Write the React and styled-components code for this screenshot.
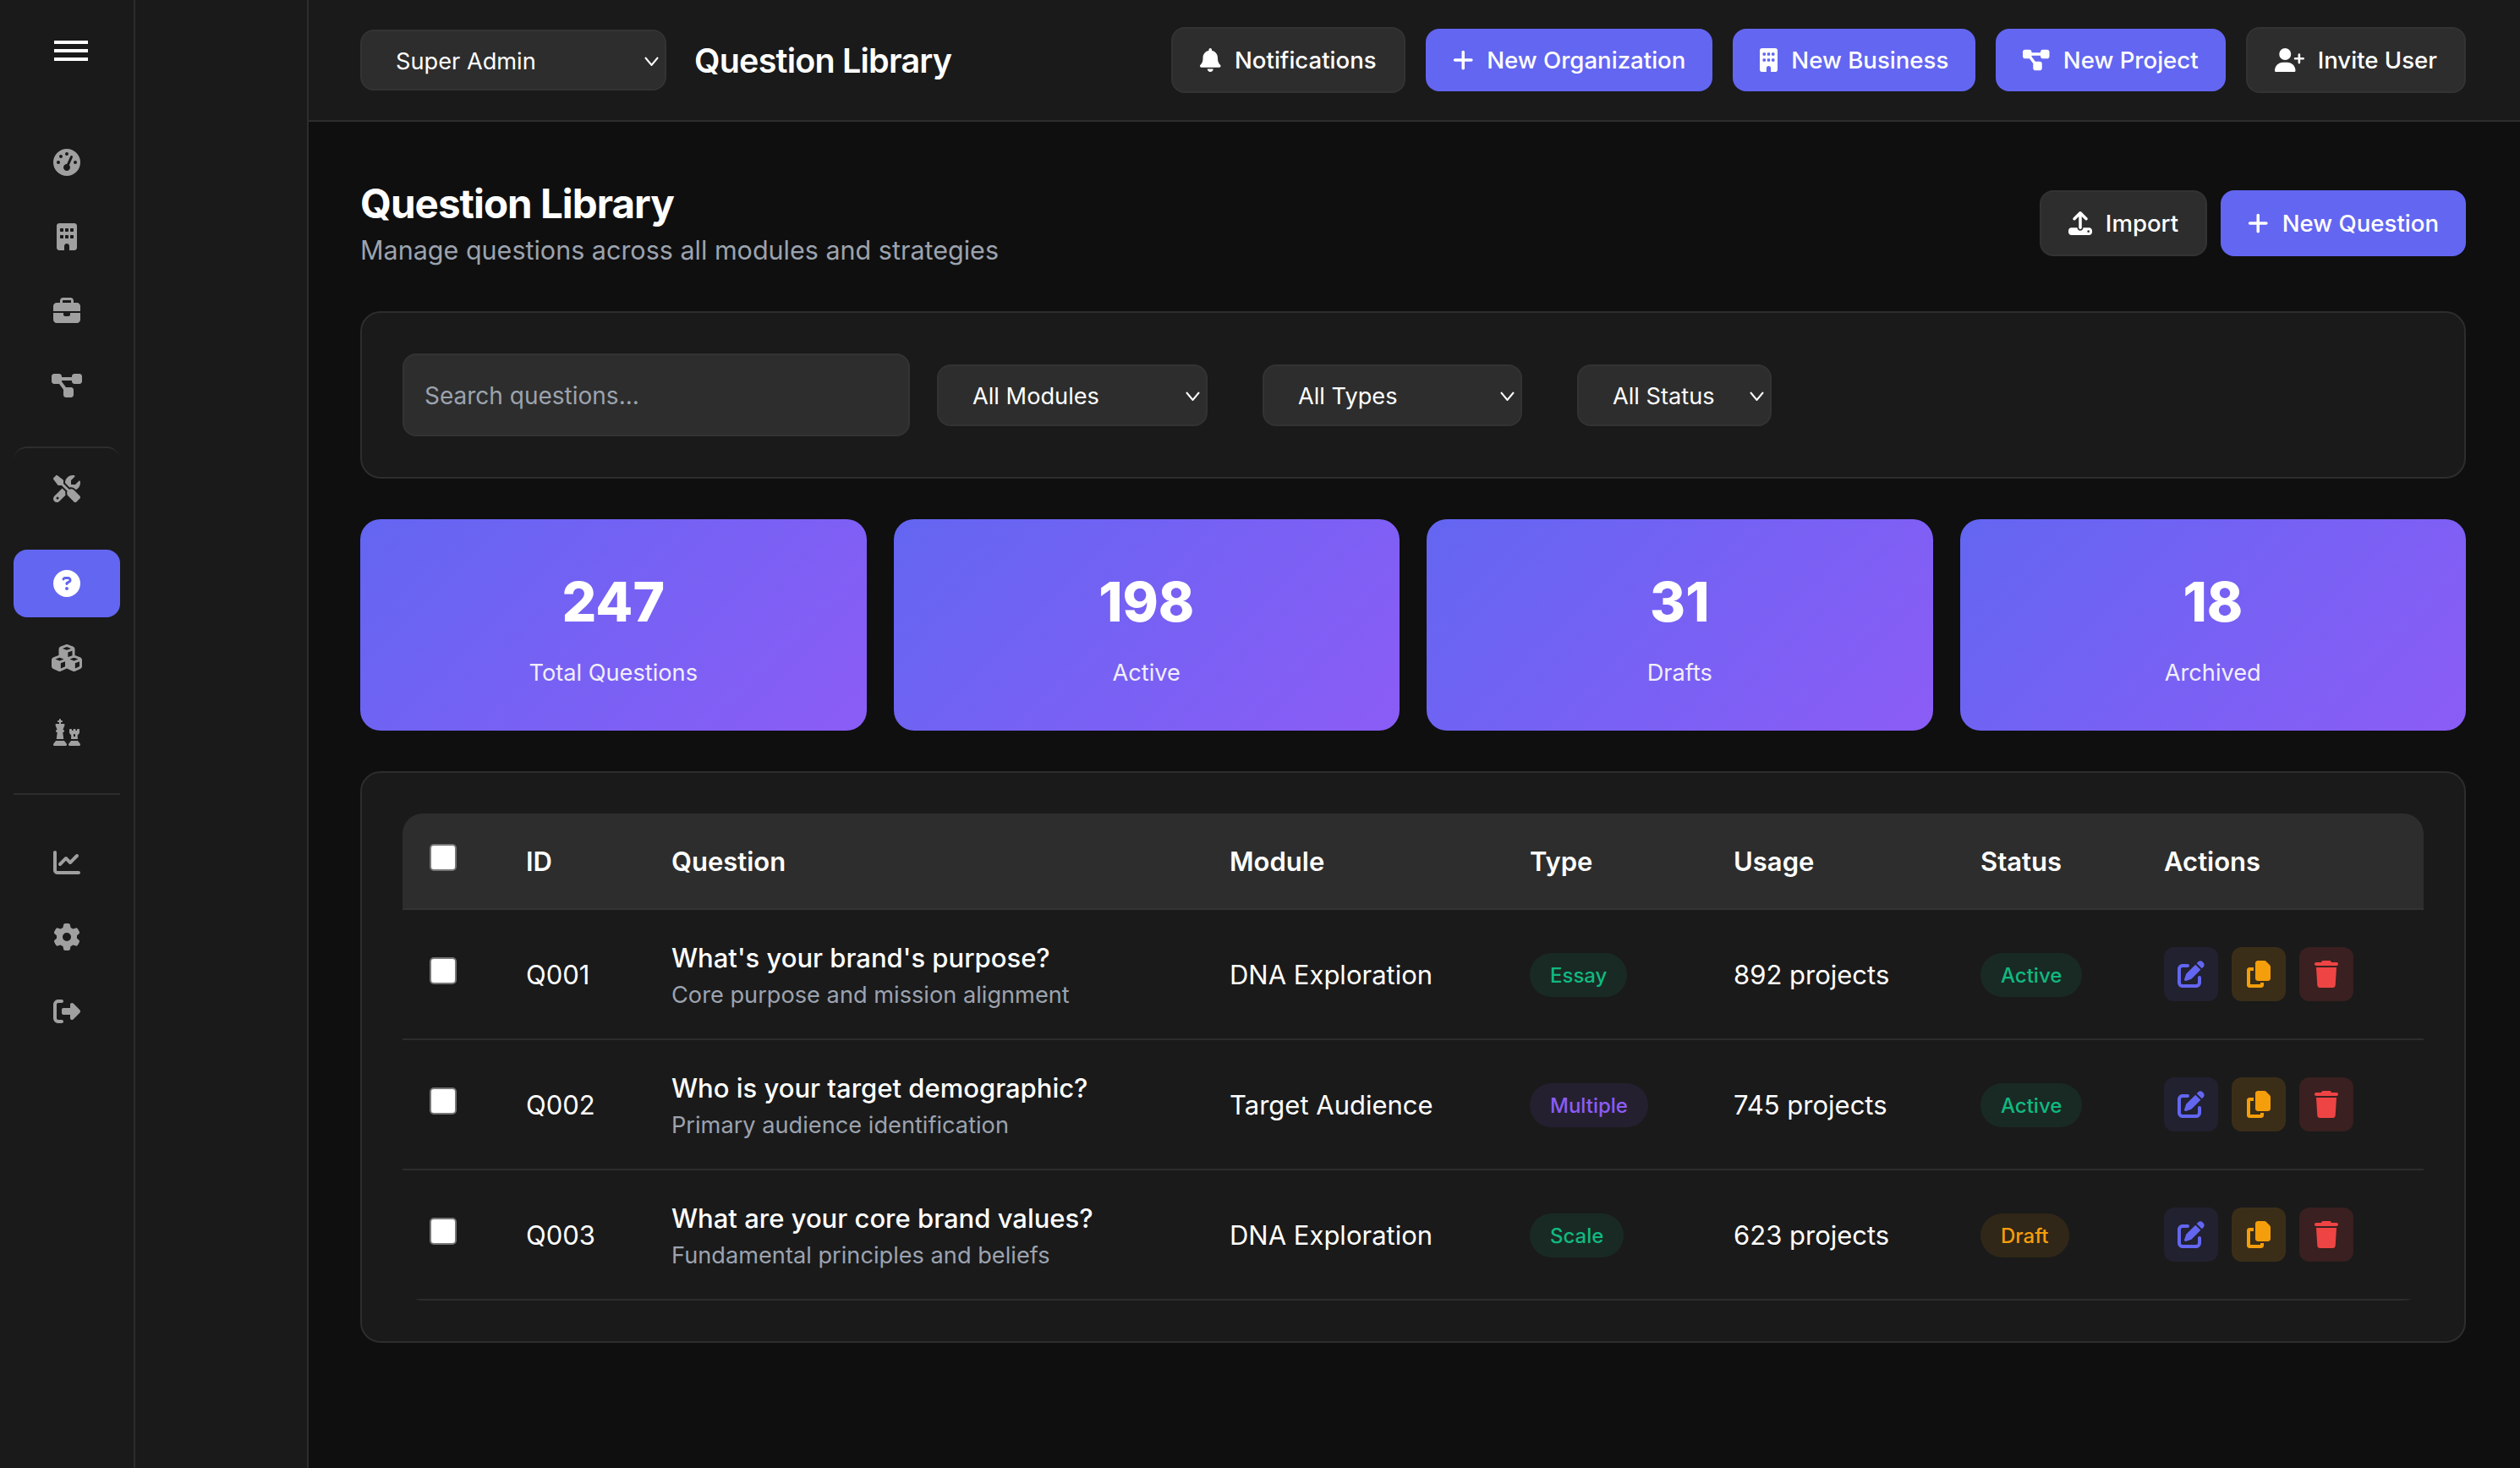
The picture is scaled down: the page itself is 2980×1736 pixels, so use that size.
import React from 'react';
import styled, { createGlobalStyle } from 'styled-components';
import {
  FaBell, FaBriefcase, FaBuilding, FaChartLine, FaChess, FaCircleQuestion, FaCopy, FaCubes,
  FaDiagramProject, FaGaugeHigh, FaGear, FaPenToSquare, FaPlus, FaRightFromBracket,
  FaScrewdriverWrench, FaTrash, FaUpload, FaUserPlus,
} from 'react-icons/fa6';

const GlobalStyle = createGlobalStyle`
  * { box-sizing: border-box; }
  html, body { margin: 0; background: #0f0f0f; }
  body { font-family: Inter, "Liberation Sans", sans-serif; color: #fff; }
`;

const COLUMNS = '114px 172px 660px 355px 241px 292px 217px 339px';

const tones = {
  green: { color: '#10b981', bg: 'rgba(16, 185, 129, 0.1)' },
  purple: { color: '#8b5cf6', bg: 'rgba(139, 92, 246, 0.1)' },
  amber: { color: '#f59e0b', bg: 'rgba(245, 158, 11, 0.1)' },
};

const actionTones = {
  edit: { color: '#6366f1', bg: 'rgba(99, 102, 241, 0.1)' },
  copy: { color: '#f59e0b', bg: 'rgba(245, 158, 11, 0.15)' },
  remove: { color: '#ef4444', bg: 'rgba(239, 68, 68, 0.15)' },
};

const Shell = styled.div`
  display: flex;
  height: 1736px;
  overflow: hidden;
`;

const Rail = styled.nav`
  width: 160px;
  flex: none;
  background: #1a1a1a;
  border-right: 2px solid #2d2d2d;
  padding: 48px 16px 0;
`;

const Burger = styled.div`
  display: flex;
  flex-direction: column;
  gap: 6px;
  width: 40px;
  margin: 0 0 80px 48px;
  span { height: 4px; background: #fff; }
`;

const NavItem = styled.a`
  display: flex;
  align-items: center;
  justify-content: center;
  height: ${(p) => (p.$ruled ? '98px' : '80px')};
  margin-bottom: ${(p) => (p.$ruled ? '24px' : '8px')};
  margin-top: ${(p) => (p.$ruled ? '32px' : '0')};
  border-radius: 16px;
  border-top: ${(p) => (p.$ruled ? '2px solid #2d2d2d' : 'none')};
  background: ${(p) => (p.$active ? '#6366f1' : 'transparent')};
  color: ${(p) => (p.$active ? '#fff' : '#a0a0a0')};
`;

// FA glyphs keep their own width: $r is width over height, $size the height
const Glyph = styled.span`
  display: block;
  flex: none;
  width: ${(p) => p.$size * (p.$r || 1)}px;
  height: ${(p) => p.$size}px;
  svg { display: block; width: 100%; height: 100%; }
`;

const RailRule = styled.div`
  height: 2px;
  background: #2d2d2d;
  margin: 32px 0 40px;
`;

const SubPanel = styled.aside`
  width: 205px;
  flex: none;
  background: #1a1a1a;
  border-right: 2px solid #2d2d2d;
`;

const Main = styled.main`
  flex: 1;
  min-width: 0;
  background: #0f0f0f;
`;

const TopBar = styled.header`
  display: flex;
  align-items: center;
  height: 144px;
  padding: 0 64px 0 61px;
  background: #1a1a1a;
  border-bottom: 2px solid #2d2d2d;
`;

const TopTitle = styled.div`
  margin-left: 33px;
  padding-top: 2px;
  font-size: 39.5px;
  font-weight: 600;
  letter-spacing: -0.8px;
`;

const TopActions = styled.div`
  display: flex;
  align-items: center;
  gap: 24px;
  margin-left: auto;
`;

const Button = styled.button`
  display: flex;
  align-items: center;
  gap: 16px;
  height: ${(p) => p.$h}px;
  padding: 0 32px;
  border: ${(p) => (p.$primary ? 'none' : '2px solid #333')};
  border-radius: 16px;
  background: ${(p) => (p.$primary ? '#6366f1' : '#2d2d2d')};
  color: #fff;
  font: 500 27.6px Inter, sans-serif;
`;

const SelectBox = styled.div`
  display: flex;
  align-items: center;
  justify-content: space-between;
  flex: none;
  width: ${(p) => p.$w}px;
  height: ${(p) => p.$h}px;
  padding: 2px 7px 0 ${(p) => p.$pad}px;
  margin-right: ${(p) => p.$after || 0}px;
  background: #2d2d2d;
  border: 2px solid #333;
  border-radius: 16px;
  font-size: 27.2px;
`;

const ChevronIcon = styled.svg`
  width: 17px;
  height: 11px;
  fill: none;
  stroke: #fff;
  stroke-width: 2;
`;

const Chevron = () => (
  <ChevronIcon viewBox="0 0 17 11">
    <path d="M1 1l7.5 9L16 1" />
  </ChevronIcon>
);

const Content = styled.div`
  padding: 60px 64px 0 61px;
`;

const PageHead = styled.div`
  display: flex;
  justify-content: space-between;
  align-items: flex-start;
  margin-bottom: 52px;
`;

const Heading = styled.div`
  padding-top: 8px;
`;

const PageTitle = styled.h1`
  margin: 0;
  font-size: 47.5px;
  line-height: 58px;
  font-weight: 700;
  letter-spacing: -0.96px;
`;

const PageSub = styled.p`
  margin: 6px 0 0;
  font-size: 30.5px;
  line-height: 40px;
  color: #9ca3af;
`;

const PageActions = styled.div`
  display: flex;
  gap: 16px;
  margin-top: 21px;
`;

const Card = styled.section`
  background: #1a1a1a;
  border: 2px solid #2d2d2d;
  border-radius: 24px;
  padding: 48px;
`;

const FilterRow = styled.div`
  display: flex;
  align-items: center;
  gap: 32px;
`;

const SearchInput = styled.input`
  width: 600px;
  height: 98px;
  flex: none;
  padding: 2px 24px 0;
  background: #2d2d2d;
  border: 2px solid #333;
  border-radius: 16px;
  color: #fff;
  font: 400 28px Inter, sans-serif;
  &::placeholder { color: #9ca3af; opacity: 1; }
`;

const StatGrid = styled.div`
  display: grid;
  grid-template-columns: repeat(4, 1fr);
  gap: 32px;
  margin: 48px 0;
`;

const StatCard = styled.div`
  display: flex;
  flex-direction: column;
  align-items: center;
  height: 250px;
  padding-top: 58px;
  border-radius: 24px;
  background: linear-gradient(135deg, #6366f1, #8b5cf6);
`;

const StatValue = styled.div`
  font-size: 64px;
  line-height: 80px;
  font-weight: 800;
`;

const StatLabel = styled.div`
  margin-top: 27px;
  font-size: 27.2px;
  line-height: 34px;
  opacity: 0.9;
`;

const Table = styled.div`
  border-radius: 24px;
  overflow: hidden;
`;

const HeadRow = styled.div`
  display: grid;
  grid-template-columns: ${COLUMNS};
  align-items: center;
  height: 114px;
  background: #2d2d2d;
  border-bottom: 2px solid #333;
  font-size: 31px;
  font-weight: 600;
`;

const Row = styled.div`
  display: grid;
  grid-template-columns: ${COLUMNS};
  align-items: center;
  height: 154px;
  border-bottom: 2px solid #2d2d2d;
  font-size: 31px;
`;

const Cell = styled.div`
  padding-left: 32px;
  min-width: 0;
  white-space: nowrap;
`;

const Check = styled.input`
  appearance: none;
  display: block;
  width: 32px;
  height: 32px;
  margin: 0 0 9px;
  background: #fff;
  border: 2px solid #767676;
  border-radius: 5px;
`;

const QuestionBlock = styled.div`
  padding-top: 3px;
`;

const QuestionTitle = styled.div`
  font-size: 31px;
  line-height: 40px;
  font-weight: 500;
`;

const QuestionHint = styled.div`
  margin-top: 6px;
  font-size: 27.2px;
  line-height: 36px;
  color: #9ca3af;
`;

const Badge = styled.span`
  display: inline-flex;
  align-items: center;
  height: 52px;
  margin-top: 2px;
  padding: 0 24px;
  border-radius: 26px;
  font-size: 24px;
  font-weight: 500;
  color: ${(p) => tones[p.$tone].color};
  background: ${(p) => tones[p.$tone].bg};
`;

const ActionRow = styled.div`
  display: flex;
  gap: 16px;
`;

const ActionButton = styled.button`
  display: flex;
  align-items: center;
  justify-content: center;
  width: 64px;
  height: 64px;
  padding: 0;
  border: none;
  border-radius: 12px;
  color: ${(p) => actionTones[p.$kind].color};
  background: ${(p) => actionTones[p.$kind].bg};
`;

const rows = [
  { id: 'Q001', title: "What's your brand's purpose?", hint: 'Core purpose and mission alignment', module: 'DNA Exploration', type: 'Essay', typeTone: 'green', usage: '892 projects', status: 'Active', statusTone: 'green' },
  { id: 'Q002', title: 'Who is your target demographic?', hint: 'Primary audience identification', module: 'Target Audience', type: 'Multiple', typeTone: 'purple', usage: '745 projects', status: 'Active', statusTone: 'green' },
  { id: 'Q003', title: 'What are your core brand values?', hint: 'Fundamental principles and beliefs', module: 'DNA Exploration', type: 'Scale', typeTone: 'green', usage: '623 projects', status: 'Draft', statusTone: 'amber' },
];

const stats = [
  { value: '247', label: 'Total Questions' },
  { value: '198', label: 'Active' },
  { value: '31', label: 'Drafts' },
  { value: '18', label: 'Archived' },
];

const railTop = [
  { icon: FaGaugeHigh },
  { icon: FaBuilding, r: 0.75 },
  { icon: FaBriefcase },
  { icon: FaDiagramProject, r: 1.125 },
  { icon: FaScrewdriverWrench, ruled: true },
  { icon: FaCircleQuestion, active: true },
  { icon: FaCubes, r: 1.125 },
  { icon: FaChess },
];

const railBottom = [{ icon: FaChartLine }, { icon: FaGear }, { icon: FaRightFromBracket }];

const RailItem = ({ item }) => (
  <NavItem $ruled={item.ruled} $active={item.active}>
    <Glyph $size={32} $r={item.r}><item.icon /></Glyph>
  </NavItem>
);

const ActionButtonWithIcon = ({ primary, h, icon: Icon, r, label }) => (
  <Button $primary={primary} $h={h}>
    <Glyph $size={28} $r={r}><Icon /></Glyph>
    {label}
  </Button>
);

const App = () => (
  <>
    <GlobalStyle />
    <Shell>
      <Rail>
        <Burger><span /><span /><span /></Burger>
        {railTop.map((item, i) => <RailItem key={i} item={item} />)}
        <RailRule />
        {railBottom.map((item, i) => <RailItem key={i} item={item} />)}
      </Rail>
      <SubPanel />
      <Main>
        <TopBar>
          <SelectBox $w={362} $h={72} $pad={40}>Super Admin<Chevron /></SelectBox>
          <TopTitle>Question Library</TopTitle>
          <TopActions>
            <ActionButtonWithIcon h={78} icon={FaBell} r={0.875} label="Notifications" />
            <ActionButtonWithIcon primary h={74} icon={FaPlus} r={0.875} label="New Organization" />
            <ActionButtonWithIcon primary h={74} icon={FaBuilding} r={0.75} label="New Business" />
            <ActionButtonWithIcon primary h={74} icon={FaDiagramProject} r={1.125} label="New Project" />
            <ActionButtonWithIcon h={78} icon={FaUserPlus} r={1.25} label="Invite User" />
          </TopActions>
        </TopBar>
        <Content>
          <PageHead>
            <Heading>
              <PageTitle>Question Library</PageTitle>
              <PageSub>Manage questions across all modules and strategies</PageSub>
            </Heading>
            <PageActions>
              <ActionButtonWithIcon h={78} icon={FaUpload} label="Import" />
              <ActionButtonWithIcon primary h={78} icon={FaPlus} r={0.875} label="New Question" />
            </PageActions>
          </PageHead>
          <Card>
            <FilterRow>
              <SearchInput placeholder="Search questions..." />
              <SelectBox $w={320} $h={73} $pad={40} $after={33}>All Modules<Chevron /></SelectBox>
              <SelectBox $w={307} $h={73} $pad={40} $after={33}>All Types<Chevron /></SelectBox>
              <SelectBox $w={230} $h={73} $pad={40}>All Status<Chevron /></SelectBox>
            </FilterRow>
          </Card>
          <StatGrid>
            {stats.map((s) => (
              <StatCard key={s.label}>
                <StatValue>{s.value}</StatValue>
                <StatLabel>{s.label}</StatLabel>
              </StatCard>
            ))}
          </StatGrid>
          <Card>
            <Table>
              <HeadRow>
                <Cell><Check type="checkbox" /></Cell>
                <Cell>ID</Cell>
                <Cell>Question</Cell>
                <Cell>Module</Cell>
                <Cell>Type</Cell>
                <Cell>Usage</Cell>
                <Cell>Status</Cell>
                <Cell>Actions</Cell>
              </HeadRow>
              {rows.map((r) => (
                <Row key={r.id}>
                  <Cell><Check type="checkbox" /></Cell>
                  <Cell>{r.id}</Cell>
                  <Cell>
                    <QuestionBlock>
                      <QuestionTitle>{r.title}</QuestionTitle>
                      <QuestionHint>{r.hint}</QuestionHint>
                    </QuestionBlock>
                  </Cell>
                  <Cell>{r.module}</Cell>
                  <Cell><Badge $tone={r.typeTone}>{r.type}</Badge></Cell>
                  <Cell>{r.usage}</Cell>
                  <Cell><Badge $tone={r.statusTone}>{r.status}</Badge></Cell>
                  <Cell>
                    <ActionRow>
                      <ActionButton $kind="edit"><Glyph $size={32}><FaPenToSquare /></Glyph></ActionButton>
                      <ActionButton $kind="copy"><Glyph $size={32}><FaCopy /></Glyph></ActionButton>
                      <ActionButton $kind="remove"><Glyph $size={32} $r={0.875}><FaTrash /></Glyph></ActionButton>
                    </ActionRow>
                  </Cell>
                </Row>
              ))}
            </Table>
          </Card>
        </Content>
      </Main>
    </Shell>
  </>
);

export default App;
